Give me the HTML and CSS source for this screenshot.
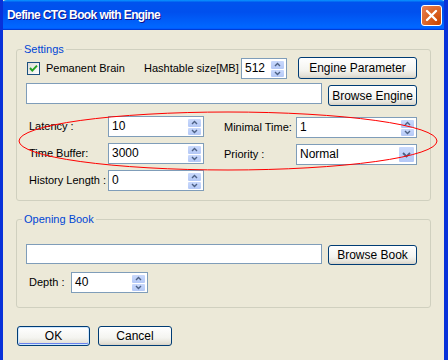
FILE: index.html
```html
<!DOCTYPE html>
<html>
<head>
  <meta charset="utf-8">
  <link rel="stylesheet" href="styles.css">
</head>
<body>
  <div class="window">
    <div class="titlebar">
      <span class="title">Define CTG Book with Engine</span>
      <div class="close-btn">
        <svg width="13" height="13" viewBox="0 0 13 13"><path d="M2 2 L11 11 M11 2 L2 11" stroke="#fff" stroke-width="2.4" stroke-linecap="round"/></svg>
      </div>
    </div>

    <div class="client">
      <div class="group settings">
        <span class="group-title">Settings</span>

        <div class="row row-brain">
          <span class="checkbox">
            <svg width="11" height="11" viewBox="0 0 11 11"><path d="M2 5 L4.3 7.6 L9 2.6" fill="none" stroke="#21a121" stroke-width="2"/></svg>
          </span>
          <span class="label brain-label">Pemanent Brain</span>
          <span class="label hash-label">Hashtable size[MB]</span>
          <div class="textbox spin w-hash">
            <span class="value">512</span>
            <span class="spin-btns">
              <span class="spin-half"><svg width="7" height="5" viewBox="0 0 7 5"><path d="M1 4 L3.5 1.5 L6 4" fill="none" stroke="#4d6185" stroke-width="1.4"/></svg></span>
              <span class="spin-half"><svg width="7" height="5" viewBox="0 0 7 5"><path d="M1 1 L3.5 3.5 L6 1" fill="none" stroke="#4d6185" stroke-width="1.4"/></svg></span>
            </span>
          </div>
          <button class="btn btn-param">Engine Parameter</button>
        </div>

        <div class="row row-path">
          <div class="textbox w-path"></div>
          <button class="btn btn-browse">Browse Engine</button>
        </div>

        <div class="row row-param first">
          <span class="label col-label">Latency :</span>
          <div class="textbox spin w-num">
            <span class="value">10</span>
            <span class="spin-btns">
              <span class="spin-half"><svg width="7" height="5" viewBox="0 0 7 5"><path d="M1 4 L3.5 1.5 L6 4" fill="none" stroke="#4d6185" stroke-width="1.4"/></svg></span>
              <span class="spin-half"><svg width="7" height="5" viewBox="0 0 7 5"><path d="M1 1 L3.5 3.5 L6 1" fill="none" stroke="#4d6185" stroke-width="1.4"/></svg></span>
            </span>
          </div>
          <span class="label col-label2">Minimal Time:</span>
          <div class="textbox spin w-wide shift">
            <span class="value">1</span>
            <span class="spin-btns">
              <span class="spin-half"><svg width="7" height="5" viewBox="0 0 7 5"><path d="M1 4 L3.5 1.5 L6 4" fill="none" stroke="#4d6185" stroke-width="1.4"/></svg></span>
              <span class="spin-half"><svg width="7" height="5" viewBox="0 0 7 5"><path d="M1 1 L3.5 3.5 L6 1" fill="none" stroke="#4d6185" stroke-width="1.4"/></svg></span>
            </span>
          </div>
        </div>

        <div class="row row-param">
          <span class="label col-label">Time Buffer:</span>
          <div class="textbox spin w-num">
            <span class="value">3000</span>
            <span class="spin-btns">
              <span class="spin-half"><svg width="7" height="5" viewBox="0 0 7 5"><path d="M1 4 L3.5 1.5 L6 4" fill="none" stroke="#4d6185" stroke-width="1.4"/></svg></span>
              <span class="spin-half"><svg width="7" height="5" viewBox="0 0 7 5"><path d="M1 1 L3.5 3.5 L6 1" fill="none" stroke="#4d6185" stroke-width="1.4"/></svg></span>
            </span>
          </div>
          <span class="label col-label2">Priority :</span>
          <div class="textbox select w-wide shift">
            <span class="value">Normal</span>
            <span class="drop-btn"><svg width="9" height="6" viewBox="0 0 9 6"><path d="M1 1 L4.5 4.5 L8 1" fill="none" stroke="#4d6185" stroke-width="1.8"/></svg></span>
          </div>
        </div>

        <div class="row row-param">
          <span class="label col-label">History Length :</span>
          <div class="textbox spin w-num">
            <span class="value">0</span>
            <span class="spin-btns">
              <span class="spin-half"><svg width="7" height="5" viewBox="0 0 7 5"><path d="M1 4 L3.5 1.5 L6 4" fill="none" stroke="#4d6185" stroke-width="1.4"/></svg></span>
              <span class="spin-half"><svg width="7" height="5" viewBox="0 0 7 5"><path d="M1 1 L3.5 3.5 L6 1" fill="none" stroke="#4d6185" stroke-width="1.4"/></svg></span>
            </span>
          </div>
        </div>
      </div>

      <div class="group book">
        <span class="group-title">Opening Book</span>

        <div class="row row-book">
          <div class="textbox w-path short"></div>
          <button class="btn btn-browse short">Browse Book</button>
        </div>

        <div class="row row-depth">
          <span class="label depth-label">Depth :</span>
          <div class="textbox spin w-depth">
            <span class="value">40</span>
            <span class="spin-btns">
              <span class="spin-half"><svg width="7" height="5" viewBox="0 0 7 5"><path d="M1 4 L3.5 1.5 L6 4" fill="none" stroke="#4d6185" stroke-width="1.4"/></svg></span>
              <span class="spin-half"><svg width="7" height="5" viewBox="0 0 7 5"><path d="M1 1 L3.5 3.5 L6 1" fill="none" stroke="#4d6185" stroke-width="1.4"/></svg></span>
            </span>
          </div>
        </div>
      </div>

      <div class="row row-actions">
        <button class="btn btn-ok default">OK</button>
        <button class="btn btn-cancel">Cancel</button>
      </div>
    </div>

    <svg class="annotation" width="448" height="360" viewBox="0 0 448 360">
      <ellipse cx="228" cy="141" rx="209" ry="29" fill="none" stroke="#f00" stroke-width="1"/>
    </svg>
  </div>
</body>
</html>
```

FILE: styles.css
```css
body {
  margin: 0;
  font-family: "Liberation Sans", Arial, sans-serif;
  font-size: 11px;
  color: #000;
}

.window {
  position: relative;
  width: 448px;
  height: 360px;
  box-sizing: border-box;
  background: #ece9d8;
  border-left: 3px solid #0831d9;
  border-right: 4px solid #0831d9;
  overflow: hidden;
}

.titlebar {
  height: 30px;
  margin-left: -3px;
  margin-right: -4px;
  display: flex;
  align-items: center;
  justify-content: space-between;
  padding: 0 6px 0 7px;
  background: linear-gradient(#0997ff 0%, #0053ee 8%, #0050ee 40%, #0066ff 88%, #0066ff 93%, #005bff 95%, #003dd7 96%, #003dd7 100%);
  border-radius: 7px 7px 0 0;
}

.title {
  color: #fff;
  font-weight: bold;
  font-size: 12px;
  letter-spacing: -0.6px;
  text-shadow: 1px 1px #0f1089;
}

.close-btn {
  width: 21px;
  height: 21px;
  box-sizing: border-box;
  border: 1px solid #fff;
  border-radius: 3px;
  background: radial-gradient(circle at 90% 90%, #cc4600 0%, #dc6527 55%, #e8815a 100%);
  display: flex;
  align-items: center;
  justify-content: center;
}

.client {
  padding: 19px 0 0 13px;
}

.group {
  position: relative;
  width: 415px;
  box-sizing: border-box;
  border: 1px solid #d0d0bf;
  border-radius: 3px;
  padding-left: 9px;
}

.settings {
  padding-top: 7px;
  padding-bottom: 9px;
}

.book {
  margin-top: 18px;
  padding-top: 24px;
  padding-bottom: 14px;
}

.group-title {
  position: absolute;
  left: 5px;
  top: -8px;
  padding: 0 2px;
  background: #ece9d8;
  color: #0046d5;
  line-height: 14px;
}

.row {
  display: flex;
  align-items: flex-start;
}

.label {
  line-height: 20px;
  white-space: nowrap;
}

.row-brain {
  height: 22px;
  align-items: center;
}

.checkbox {
  width: 13px;
  height: 13px;
  box-sizing: border-box;
  margin-left: 1px;
  border: 1px solid #1c5180;
  background: linear-gradient(135deg, #dcdcd7, #fff);
  display: flex;
  align-items: center;
  justify-content: center;
}

.brain-label {
  width: 98px;
  margin-left: 6px;
}

.hash-label {
  width: 97px;
}

.textbox {
  height: 21px;
  box-sizing: border-box;
  border: 1px solid #7f9db9;
  background: #fff;
  display: flex;
  padding: 1px;
}

.value {
  flex: 1;
  padding-left: 2px;
  line-height: 17px;
  font-size: 12px;
}

.spin-btns {
  width: 15px;
  display: flex;
  flex-direction: column;
}

.spin-half {
  flex: 1;
  display: flex;
  align-items: center;
  justify-content: center;
  background: linear-gradient(#c9d9fc, #b4c8f6);
  border: 1px solid #fff;
  border-radius: 2px;
  margin-bottom: -1px;
}

.drop-btn {
  width: 15px;
  display: flex;
  align-items: center;
  justify-content: center;
  background: linear-gradient(#c9d9fc, #b4c8f6);
  border: 1px solid #fff;
  border-radius: 2px;
}

.w-hash {
  width: 46px;
  margin-top: 1px;
}

.btn {
  box-sizing: border-box;
  height: 22px;
  padding: 0;
  border: 1px solid #003c74;
  border-radius: 3px;
  background: linear-gradient(#ffffff 0%, #f4f4f0 60%, #e3e0d6 90%, #d6d0c5 100%);
  font-family: "Liberation Sans", Arial, sans-serif;
  font-size: 12px;
  color: #000;
}

.btn-param {
  width: 119px;
  margin-left: 11px;
}

.row-path {
  margin-top: 4px;
  height: 23px;
}

.w-path {
  width: 296px;
}

.btn-browse {
  width: 89px;
  height: 21px;
  margin-left: 6px;
  margin-top: 2px;
}

.row-param {
  margin-top: 5px;
}

.row-param.first {
  margin-top: 10px;
}

.col-label {
  width: 79px;
  margin-left: 3px;
}

.col-label2 {
  width: 72px;
  margin-left: 20px;
  line-height: 22px;
}

.w-num {
  width: 96px;
}

.w-wide {
  width: 121px;
}

.shift {
  margin-top: 1px;
}

.row-book {
  height: 21px;
}

.short {
  height: 20px;
}

.btn-browse.short {
  margin-top: 1px;
}

.row-depth {
  margin-top: 7px;
}

.depth-label {
  width: 42px;
  margin-left: 3px;
}

.w-depth {
  width: 77px;
}

.row-actions {
  margin-top: 18px;
  margin-left: 1px;
}

.btn-ok {
  width: 73px;
  height: 20px;
}

.btn-ok.default {
  box-shadow: inset 0 0 0 1px #cee7ff, inset 0 -1px 0 1px #6982ee;
}

.btn-cancel {
  width: 74px;
  height: 20px;
  margin-left: 8px;
}

.annotation {
  position: absolute;
  left: -3px;
  top: 0;
  pointer-events: none;
}
```
